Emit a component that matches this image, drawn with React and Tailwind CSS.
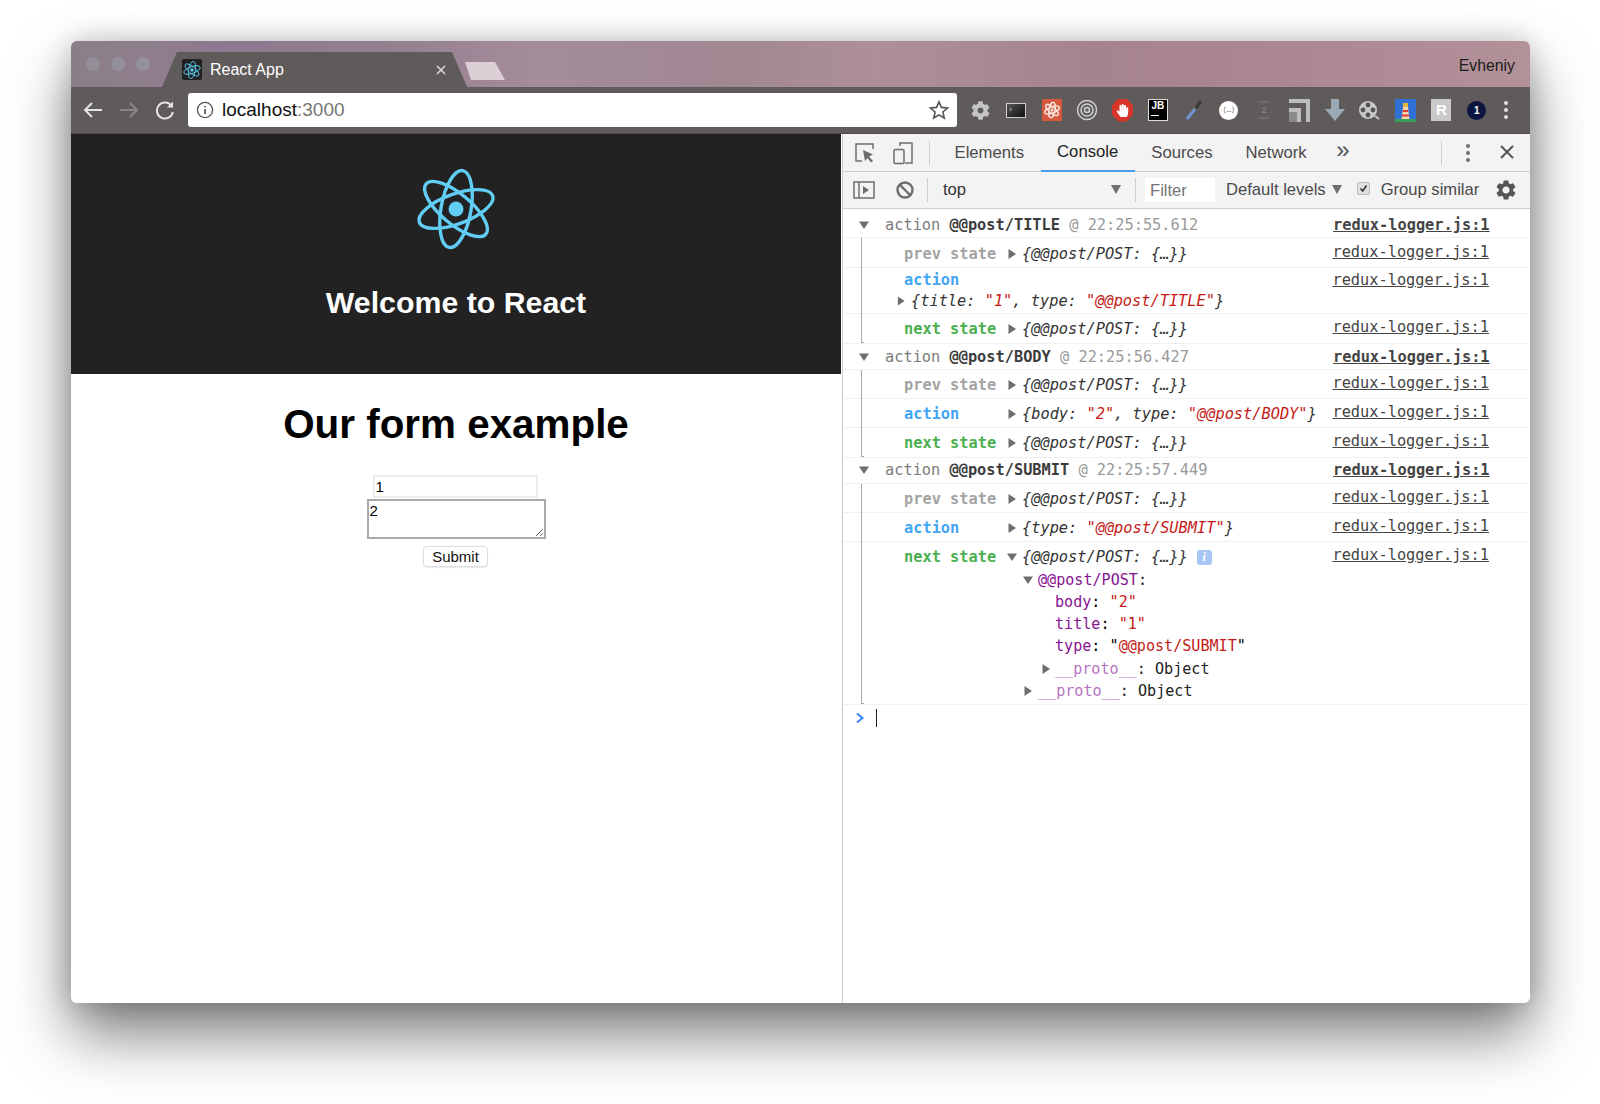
import { FaCog, FaHandPaper } from 'react-icons/fa'
import { MdSettings } from 'react-icons/md'

const mono = { fontFamily: '"DejaVu Sans Mono", monospace' }

function Tri({ dir = 'right', className = '' }) {
  return (
    <svg width="10" height="10" viewBox="0 0 10 10" className={`shrink-0 ${className}`}>
      <path d={dir === 'right' ? 'M1.5 0 L9 5 L1.5 10 Z' : 'M0 1.5 L10 1.5 L5 9 Z'} fill="#6e6e6e" />
    </svg>
  )
}

function ReactLogo({ size = 90, color = '#61cdf5', sw = 3.4 }) {
  return (
    <svg width={size} height={size} viewBox="0 0 90 90">
      <g fill="none" stroke={color} strokeWidth={sw}>
        <ellipse cx="45" cy="45" rx="39" ry="15" transform="rotate(-20 45 45)" />
        <ellipse cx="45" cy="45" rx="39" ry="15" transform="rotate(40 45 45)" />
        <ellipse cx="45" cy="45" rx="39" ry="15" transform="rotate(100 45 45)" />
      </g>
      <circle cx="45" cy="45" r="7.5" fill={color} />
    </svg>
  )
}

function Link({ bold }) {
  return (
    <span className={`underline shrink-0 w-[156px] whitespace-nowrap text-[#444] ${bold ? 'font-bold' : ''}`}>redux-logger.js:1</span>
  )
}

function Head({ name, time, h }) {
  return (
    <div className={`flex items-center border-b border-[#f0f0f0] pl-[16px] pr-[41px] ${h}`}>
      <Tri dir="down" className="mr-[16px]" />
      <div className="flex-1 whitespace-pre">
        <span className="text-[#7b7b7b]">action </span>
        <span className="font-bold text-[#3b3b3b]">{name}</span>
        <span className="text-[#9a9a9a]"> @ {time}</span>
      </div>
      <Link bold />
    </div>
  )
}

function Obj({ children }) {
  return <span className="italic text-[#333] whitespace-pre">{children}</span>
}

function Str({ children }) {
  return <span className="text-[#c41a16]">{children}</span>
}

function StateObj() {
  return <Obj>{'{@@post/POST: {…}}'}</Obj>
}

function Row({ label, color, children, h = 'h-[29px] pt-[2px]', dir }) {
  return (
    <div className={`flex items-center border-b border-[#f0f0f0] pl-[61px] pr-[41px] ${h}`}>
      <span className={`font-bold w-[103px] shrink-0 ${color}`}>{label}</span>
      <Tri dir={dir} className="mr-[5px]" />
      <div className="flex-1">{children}</div>
      <span className="-mt-[4px]"><Link /></span>
    </div>
  )
}

function GroupLine({ children }) {
  return (
    <div className="relative">
      <div className="absolute left-[18px] top-0 bottom-[1px] w-[3px] border-l border-b border-[#a8a8a8]" />
      {children}
    </div>
  )
}

const prev = 'text-[#a3a3a3]'
const act = 'text-[#42a5f5]'
const next = 'text-[#4caf50]'

function Console() {
  return (
    <div className="text-[15.3px] leading-[22px]" style={mono}>
      <Head name="@@post/TITLE" time="22:25:55.612" h="h-[29px] pt-[3px]" />
      <GroupLine>
        <Row label="prev state" color={prev} h="h-[30px] pt-[2px]"><StateObj /></Row>
        <div className="flex border-b border-[#f0f0f0] pr-[41px] h-[46px]">
          <div className="flex-1 pl-[61px] pt-[1px]">
            <div className={`font-bold ${act}`}>action</div>
            <div className="flex items-center -ml-[8px] -mt-[1px]">
              <Tri className="mr-[5px] scale-90" />
              <Obj>{'{title: '}<Str>"1"</Str>{', type: '}<Str>"@@post/TITLE"</Str>{'}'}</Obj>
            </div>
          </div>
          <span className="pt-[1px]"><Link /></span>
        </div>
        <Row label="next state" color={next} h="h-[30px]"><StateObj /></Row>
      </GroupLine>
      <Head name="@@post/BODY" time="22:25:56.427" h="h-[26px]" />
      <GroupLine>
        <Row label="prev state" color={prev}><StateObj /></Row>
        <Row label="action" color={act}>
          <Obj>{'{body: '}<Str>"2"</Str>{', type: '}<Str>"@@post/BODY"</Str>{'}'}</Obj>
        </Row>
        <Row label="next state" color={next} h="h-[30px]"><StateObj /></Row>
      </GroupLine>
      <Head name="@@post/SUBMIT" time="22:25:57.449" h="h-[26px] pb-[2px]" />
      <GroupLine>
        <Row label="prev state" color={prev}><StateObj /></Row>
        <Row label="action" color={act}>
          <Obj>{'{type: '}<Str>"@@post/SUBMIT"</Str>{'}'}</Obj>
        </Row>
        <div className="border-b border-[#f0f0f0] pl-[61px] pr-[41px] pt-[4px] h-[163px]">
          <div className="flex items-center h-[22px]">
            <span className={`font-bold w-[103px] shrink-0 ${next}`}>next state</span>
            <Tri dir="down" className="mr-[5px]" />
            <div className="flex-1 flex items-center">
              <StateObj />
              <span className="ml-[9px] w-[15px] h-[15px] rounded-[3px] bg-[#a9c7f5] text-white text-[12px] leading-[15px] text-center italic font-bold" style={{ fontFamily: '"Liberation Serif", serif' }}>i</span>
            </div>
            <span className="-mt-[4px]"><Link /></span>
          </div>
          <div className="text-[15.1px] pl-[119px] mt-[1px]">
            <div className="flex items-center h-[22px]">
              <Tri dir="down" className="mr-[5px]" />
              <span className="text-[#881391]">@@post/POST</span><span className="text-[#222]">:</span>
            </div>
            <div className="pl-[32px] h-[22px]"><span className="text-[#881391]">body</span>: <Str>"2"</Str></div>
            <div className="pl-[32px] h-[22px]"><span className="text-[#881391]">title</span>: <Str>"1"</Str></div>
            <div className="pl-[32px] h-[22px]"><span className="text-[#881391]">type</span>: <span>"<Str>@@post/SUBMIT</Str>"</span></div>
            <div className="flex items-center pl-[18px] h-[22px] mt-[1px]">
              <Tri className="mr-[4px]" /><span className="text-[#b573c0]">__proto__</span><span className="text-[#222]">: Object</span>
            </div>
            <div className="flex items-center h-[22px]">
              <Tri className="mr-[5px]" /><span className="text-[#b573c0]">__proto__</span><span className="text-[#222]">: Object</span>
            </div>
          </div>
        </div>
      </GroupLine>
      <div className="flex items-center pl-[12px] h-[30px]">
        <svg width="10" height="12" viewBox="0 0 10 12" className="-mt-[5px]">
          <path d="M2 1.5 L7.5 6 L2 10.5" fill="none" stroke="#3b82f6" strokeWidth="2" />
        </svg>
        <span className="ml-[11px] w-[1px] h-[18px] -mt-[4px] bg-[#222]" />
      </div>
    </div>
  )
}

function DevTabs() {
  return (
    <div className="flex items-center h-[38px] bg-[#f3f3f3] border-b border-[#cdcdcd] text-[16.7px] text-[#4a4a4a]">
      <div className="flex items-center pl-[10px] gap-[14px]">
        <svg width="24" height="24" viewBox="0 0 24 24" fill="none" stroke="#6e6e6e" strokeWidth="1.5">
          <path d="M9 20 H3 V3 H20 V8" />
          <path d="M10 9 L20 13.5 L16 15.5 L20 20 L18 21.5 L14.5 17 L12 20 Z" fill="#6e6e6e" stroke="none" />
        </svg>
        <svg width="24" height="24" viewBox="0 0 24 24" fill="none" stroke="#6e6e6e" strokeWidth="1.5">
          <rect x="3" y="8.5" width="10" height="14" rx="1.2" />
          <path d="M9 5 V2 H21 V22 H14" />
        </svg>
      </div>
      <span className="ml-[14px] w-[1px] h-[24px] bg-[#cdcdcd]" />
      <div className="flex items-stretch h-full ml-[8px]">
        <span className="px-[16.5px] flex items-center">Elements</span>
        <span className="px-[16.5px] flex items-center text-[#222] border-b-2 border-[#4a9ae8] -mb-[1px]">Console</span>
        <span className="px-[16.5px] flex items-center">Sources</span>
        <span className="px-[16.5px] flex items-center">Network</span>
      </div>
      <span className="ml-[13px] text-[24px] leading-[24px] -mt-[5px] text-[#555]">»</span>
      <div className="flex-1" />
      <span className="w-[1px] h-[24px] bg-[#cdcdcd]" />
      <svg width="6" height="20" viewBox="0 0 6 20" className="ml-[23px]" fill="#6e6e6e">
        <circle cx="3" cy="3" r="2" /><circle cx="3" cy="10" r="2" /><circle cx="3" cy="17" r="2" />
      </svg>
      <svg width="14" height="14" viewBox="0 0 14 14" className="ml-[29px] mr-[16px] -mt-[1px]" stroke="#555" strokeWidth="2">
        <path d="M1 1 L13 13 M13 1 L1 13" />
      </svg>
    </div>
  )
}

function FilterBar() {
  return (
    <div className="flex items-center h-[37px] bg-[#f3f3f3] border-b border-[#cdcdcd] text-[16.6px] text-[#4a4a4a]">
      <svg width="22" height="18" viewBox="0 0 22 18" className="ml-[10px]" fill="none" stroke="#6e6e6e" strokeWidth="1.5">
        <rect x="1" y="1" width="20" height="16" />
        <path d="M6 1 V17" />
        <path d="M10 5 L16 9 L10 13 Z" fill="#6e6e6e" stroke="none" />
      </svg>
      <svg width="20" height="20" viewBox="0 0 20 20" className="ml-[20px]" fill="none" stroke="#6e6e6e" strokeWidth="2.4">
        <circle cx="10" cy="10" r="7.5" />
        <path d="M4.5 4.5 L15.5 15.5" />
      </svg>
      <span className="ml-[12px] w-[1px] h-[24px] bg-[#cdcdcd]" />
      <span className="ml-[15px] w-[168px] shrink-0 text-[#333]">top</span>
      <svg width="10" height="9" viewBox="0 0 10 9" fill="#6e6e6e" className="-mt-[2px]"><path d="M0 0 H10 L5 9 Z" /></svg>
      <span className="ml-[14px] w-[1px] h-[24px] bg-[#cdcdcd]" />
      <span className="ml-[9px] w-[70px] h-[24px] bg-white text-[#757575] pl-[5px] leading-[26px]">Filter</span>
      <span className="ml-[11px]">Default levels</span>
      <svg width="10" height="9" viewBox="0 0 10 9" fill="#6e6e6e" className="ml-[6px] -mt-[2px]"><path d="M0 0 H10 L5 9 Z" /></svg>
      <span className="ml-[15px] w-[13px] h-[13px] rounded-[2px] bg-[#e0e0e0] border border-[#bbb] flex items-center justify-center -mt-[3px]">
        <svg width="9" height="9" viewBox="0 0 9 9" fill="none" stroke="#333" strokeWidth="1.6"><path d="M1.5 4.5 L3.7 7 L7.5 1.5" /></svg>
      </span>
      <span className="ml-[11px]">Group similar</span>
      <MdSettings className="ml-[15px] text-[#555]" size={24} />
    </div>
  )
}

function Ext({ children }) {
  return <div className="w-[35.45px] h-[24px] flex items-center justify-center shrink-0">{children}</div>
}

function Extensions() {
  return (
    <div className="flex items-center ml-[6px]">
      <Ext><FaCog size={19} color="#c4c4c4" /></Ext>
      <Ext>
        <div className="w-[20px] h-[15px] border border-[#ccc] bg-gradient-to-br from-[#555] to-[#111] text-[8px] leading-[12px] text-[#ddd] pl-[2px]">›</div>
      </Ext>
      <Ext>
        <div className="w-[20px] h-[22px] bg-[#d5583c] flex items-center justify-center"><ReactLogo size={18} color="#f4e3dc" sw={7} /></div>
      </Ext>
      <Ext>
        <svg width="22" height="22" viewBox="0 0 22 22" fill="none" stroke="#cfcfcf" strokeWidth="1.5">
          <circle cx="11" cy="11" r="9.5" /><circle cx="11" cy="11" r="6" /><circle cx="11" cy="11" r="2.5" />
        </svg>
      </Ext>
      <Ext>
        <div className="w-[21px] h-[23px] bg-[#d8352a] [clip-path:polygon(30%_0,70%_0,100%_30%,100%_70%,70%_100%,30%_100%,0_70%,0_30%)] flex items-center justify-center">
          <FaHandPaper size={13} color="white" />
        </div>
      </Ext>
      <Ext>
        <div className="w-[20px] h-[22px] bg-black border border-[#ddd] text-white text-[10px] font-bold leading-[12px] text-center" style={{ fontFamily: '"Liberation Sans", sans-serif' }}>
          JB
          <div className="w-[8px] h-[1px] bg-white ml-[2px] mt-[3px]" />
        </div>
      </Ext>
      <Ext>
        <svg width="22" height="24" viewBox="0 0 22 24" fill="none">
          <path d="M13 11 L5 21" stroke="#6f94d8" strokeWidth="3" />
          <path d="M14 10 L19 3" stroke="#3a3a3a" strokeWidth="3.4" />
        </svg>
      </Ext>
      <Ext>
        <div className="w-[19px] h-[19px] rounded-full bg-white text-[#777] text-[7px] leading-[19px] text-center" style={mono}>{'{…}'}</div>
      </Ext>
      <Ext>
        <div className="text-[#8a8a8a] text-center leading-[8px]" style={{ fontFamily: '"Liberation Sans", sans-serif' }}>
          <div className="text-[3px]">&lt;applet&gt;</div>
          <div className="text-[9px]">2</div>
          <div className="text-[3px]">&lt;object&gt;</div>
        </div>
      </Ext>
      <Ext>
        <svg width="21" height="23" viewBox="0 0 21 23">
          <rect width="21" height="23" fill="#bdbdbd" />
          <path d="M0 4 H17 V23 H12 V9 H0 Z" fill="#5f5b5b" />
          <path d="M0 13 H8 V23 H0 Z" fill="#8a8a8a" />
        </svg>
      </Ext>
      <Ext>
        <svg width="20" height="22" viewBox="0 0 20 22"><path d="M6 0 H14 V10 H20 L10 22 L0 10 H6 Z" fill="#9aa9b3" /></svg>
      </Ext>
      <Ext>
        <svg width="22" height="22" viewBox="0 0 22 22" className="-ml-[3px]">
          <circle cx="10" cy="11" r="9" fill="#c9c9c9" />
          <circle cx="10" cy="6" r="2.4" fill="#555" /><circle cx="10" cy="16" r="2.4" fill="#555" />
          <circle cx="5" cy="11" r="2.4" fill="#555" /><circle cx="15" cy="11" r="2.4" fill="#555" />
          <path d="M17 17 L21 20" stroke="#c9c9c9" strokeWidth="2" />
        </svg>
      </Ext>
      <Ext>
        <svg width="21" height="23" viewBox="0 0 21 23">
          <rect width="21" height="23" fill="#2f6fd6" />
          <path d="M8 8 H13 L14.5 20 H6.5 Z" fill="#f3d7b0" />
          <path d="M7.8 11 H13.2 V13 H7.6 Z M7 15.5 H14 V17.5 H6.8 Z" fill="#d9442f" />
          <rect x="8" y="4" width="5" height="4" fill="#e8b53a" />
          <rect y="20" width="21" height="3" fill="#3a9e54" />
        </svg>
      </Ext>
      <Ext>
        <div className="w-[20px] h-[22px] bg-[#c9c9c9] text-white text-[15px] font-bold leading-[22px] text-center" style={{ fontFamily: '"Liberation Sans", sans-serif' }}>R</div>
      </Ext>
      <Ext>
        <div className="w-[19px] h-[19px] rounded-full bg-[#0b1540] text-white text-[10px] font-bold leading-[19px] text-center" style={{ fontFamily: '"Liberation Sans", sans-serif' }}>1</div>
      </Ext>
      <svg width="6" height="20" viewBox="0 0 6 20" className="ml-[8px]" fill="#e2e2e2">
        <circle cx="3" cy="3" r="2" /><circle cx="3" cy="10" r="2" /><circle cx="3" cy="17" r="2" />
      </svg>
    </div>
  )
}

function TitleBar() {
  return (
    <div className="flex items-end h-[46px] bg-[linear-gradient(90deg,#8a7f87_0%,#8f7e8d_6%,#8c7890_10%,#94808f_22%,#a58c9b_32%,#a08792_45%,#ad8f9b_55%,#a5838f_70%,#ab8893_85%,#b39199_100%)] relative">
      <div className="flex self-center gap-[11px] pl-[15px] mb-[1px] w-[106px] shrink-0">
        <span className="w-[14px] h-[14px] rounded-full bg-[#93909a]" />
        <span className="w-[14px] h-[14px] rounded-full bg-[#93909a]" />
        <span className="w-[14px] h-[14px] rounded-full bg-[#93909a]" />
      </div>
      <div className="w-[305px] h-[35px] bg-[#5f5b5b] [clip-path:polygon(15px_0,290px_0,100%_100%,0_100%)] flex items-center pl-[20px] text-white text-[16px] shrink-0 -ml-[15px]">
        <div className="w-[20px] h-[21px] bg-[#222] rounded-[2px] flex items-center justify-center mr-[8px]">
          <ReactLogo size={20} sw={4} />
        </div>
        <span className="flex-1">React App</span>
        <svg width="10" height="10" viewBox="0 0 10 10" className="mr-[21px]" stroke="#ddd" strokeWidth="1.5">
          <path d="M1 1 L9 9 M9 1 L1 9" />
        </svg>
      </div>
      <div className="w-[40px] h-[18px] bg-[#dccfd6] [clip-path:polygon(0_0,75%_0,100%_100%,15%_100%)] mb-[7px] -ml-[2px]" />
      <div className="flex-1" />
      <span className="self-center text-[15.8px] text-[#1c1c1c] mr-[15px] mt-[3px]">Evheniy</span>
    </div>
  )
}

function Toolbar() {
  return (
    <div className="flex items-center h-[47px] bg-[#5f5b5b] pl-[4px] border-b border-[#4d4a4a]">
      <div className="w-[36px] flex justify-center">
        <svg width="20" height="18" viewBox="0 0 20 18" fill="none" stroke="#e4e4e4" strokeWidth="2"><path d="M19 9 H2 M9 2 L2 9 L9 16" /></svg>
      </div>
      <div className="w-[36px] flex justify-center">
        <svg width="20" height="18" viewBox="0 0 20 18" fill="none" stroke="#8a8686" strokeWidth="2"><path d="M1 9 H18 M11 2 L18 9 L11 16" /></svg>
      </div>
      <div className="w-[36px] flex justify-center">
        <svg width="20" height="20" viewBox="0 0 20 20" fill="none" stroke="#e4e4e4" strokeWidth="2">
          <path d="M16.5 6 A8 8 0 1 0 17.8 12" />
          <path d="M18 1.5 V7.5 H12" fill="#e4e4e4" stroke="none" />
        </svg>
      </div>
      <div className="ml-[5px] w-[769px] h-[34px] bg-white rounded-[3px] flex items-center pl-[8px] pr-[8px]">
        <svg width="18" height="18" viewBox="0 0 18 18" fill="none" stroke="#555" strokeWidth="1.4">
          <circle cx="9" cy="9" r="7.6" />
          <path d="M9 8 V13 M9 5 V6.6" strokeWidth="1.7" />
        </svg>
        <span className="ml-[8px] mt-[1px] text-[19px] flex-1 text-[#111]">localhost<span className="text-[#757575]">:3000</span></span>
        <svg width="20" height="20" viewBox="0 0 20 20" fill="none" stroke="#555" strokeWidth="1.6">
          <path d="M10 1.8 L12.4 7.4 L18.5 8 L13.9 12 L15.3 18 L10 14.9 L4.7 18 L6.1 12 L1.5 8 L7.6 7.4 Z" />
        </svg>
      </div>
      <Extensions />
    </div>
  )
}

function Page() {
  return (
    <div className="w-[771px] shrink-0 bg-white">
      <div className="mr-[1px] h-[240px] bg-[#222] flex flex-col items-center pt-[30px]">
        <ReactLogo />
        <h2 className="text-white font-bold text-[30.3px] leading-[36px] mt-[31px]">Welcome to React</h2>
      </div>
      <div className="flex flex-col items-center pr-[1px]">
        <h1 className="text-[40.4px] font-bold text-black leading-[50px] mt-[25px]">Our form example</h1>
        <input
          readOnly
          value="1"
          className="mt-[26px] -ml-[2px] w-[165px] h-[23px] border-2 border-[#ececec] text-[15px] px-[1px] bg-white outline-none"
        />
        <textarea
          readOnly
          value="2"
          className="mt-[1px] w-[179px] h-[40px] border-2 border-[#a9a9a9] text-[15px] leading-[17px] px-[1px] py-[1px] bg-white outline-none"
        />
        <button className="mt-[7px] -ml-[1px] w-[65px] h-[21px] border border-[#ddd] rounded-[4px] bg-white text-[15px] leading-[19px] text-[#111] shadow-[0_1px_1px_rgba(0,0,0,0.08)]">
          Submit
        </button>
      </div>
    </div>
  )
}

export default function App() {
  return (
    <div className="w-[1600px] h-[1104px] bg-white pt-[41px] pl-[71px] overflow-hidden" style={{ fontFamily: '"Liberation Sans", Arial, sans-serif' }}>
      <div className="w-[1459px] h-[962px] rounded-[6px] overflow-hidden flex flex-col bg-white shadow-[0_32px_60px_rgba(0,0,0,0.5),0_0_28px_rgba(0,0,0,0.2)]">
        <TitleBar />
        <Toolbar />
        <div className="flex flex-1 min-h-0">
          <Page />
          <div className="flex-1 border-l border-[#cdcdcd] min-w-0">
            <DevTabs />
            <FilterBar />
            <Console />
          </div>
        </div>
      </div>
    </div>
  )
}
